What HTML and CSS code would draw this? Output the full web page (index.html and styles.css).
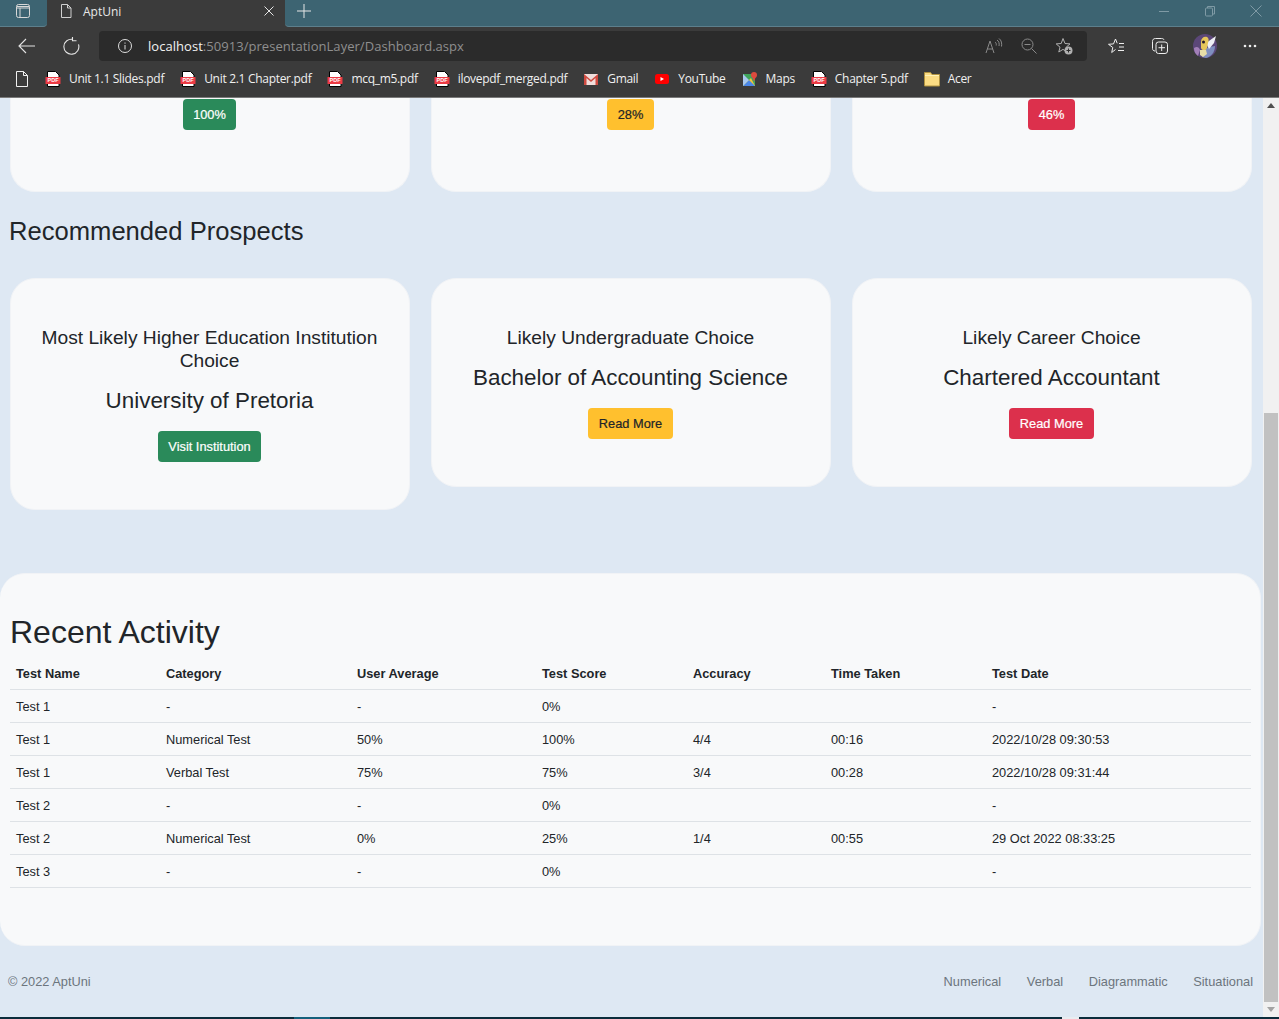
FILE: index.html
```html
<!DOCTYPE html>
<html>
<head>
  <meta charset="utf-8">
  <title>AptUni</title>
  <link rel="stylesheet" href="styles.css">
</head>
<body>
  <div class="tabbar">
    <div class="tabbtn">
      <svg width="16" height="16" viewBox="0 0 16 16" fill="none" stroke="#d8d8d8"><rect x="1.500" y="1.500" width="13" height="13" rx="2"/><path d="M2 3.500h12M1.500 5h13M5 5v9.500" /></svg>
    </div>
    <div class="tab">
      <svg width="14" height="16" viewBox="0 0 14 16" fill="none" stroke="#cfcfcf"><path d="M2.500 1.500h6l3.500 3.500v9.500h-9.500zM8.500 1.500v3.500h3.500"/></svg>
      <span class="tab-title">AptUni</span>
      <svg width="10" height="10" viewBox="0 0 10 10" stroke="#e6e6e6"><path d="M.5 .5l9 9M9.500 .5l-9 9"/></svg>
    </div>
    <div class="strip">
      <div class="newtab">
        <svg width="14" height="14" viewBox="0 0 14 14" stroke="#e6e6e6"><path d="M7 0v14M0 7h14"/></svg>
      </div>
      <div class="winbtns">
        <svg width="12" height="12" viewBox="0 0 12 12" stroke="#7f9aa5"><path d="M1 6.500h10"/></svg>
        <svg width="12" height="12" viewBox="0 0 12 12" fill="none" stroke="#7f9aa5"><rect x="1.500" y="3" width="7" height="8" rx="1"/><path d="M3.500 3v-1.500h7v7.500h-2"/></svg>
        <svg width="12" height="12" viewBox="0 0 12 12" stroke="#7f9aa5"><path d="M.5 .5l11 11M11.500 .5l-11 11"/></svg>
      </div>
    </div>
  </div>

  <div class="toolbar">
    <svg class="tool-back" width="18" height="16" viewBox="0 0 18 16" fill="none" stroke="#e4e4e4" stroke-width="1.100"><path d="M17 8h-15M8 1l-7 7 7 7"/></svg>
    <svg class="tool-reload" width="18" height="18" viewBox="0 0 18 18" fill="none" stroke="#e4e4e4" stroke-width="1.100"><path d="M11 2.400a7.500 7.500 0 1 0 5.500 5"/><path d="M10.500 0v3.800h4"/></svg>
    <div class="addressbar">
      <svg width="16" height="16" viewBox="0 0 16 16" fill="none" stroke="#ddd"><circle cx="8" cy="8" r="6.500"/><path d="M8 7v4.500M8 4.500v1.200"/></svg>
      <span class="url"><span class="url-host">localhost</span>:50913/presentationLayer/Dashboard.aspx</span>
      <div class="addr-icons">
        <svg width="18" height="16" viewBox="0 0 18 16" fill="none" stroke="#8a8a8a"><path d="M1 15l4-12 4 12M2.300 11h5.400M10 4c1.200 .8 1.500 2 1.200 3.500M12 2c2 1.300 2.500 3.500 2 6M14 .5c2.500 1.800 3 5 2.500 8"/></svg>
        <svg width="16" height="16" viewBox="0 0 16 16" fill="none" stroke="#8a8a8a"><circle cx="6.500" cy="6.500" r="5.500"/><path d="M3.500 6.500h6M10.500 10.500l5 5"/></svg>
        <svg width="18" height="18" viewBox="0 0 18 18" fill="none" stroke="#b0b0b0"><path d="M8 1.500l2 5 5 .4-3.800 3.300 1 4.800-4.200-2.600-4.200 2.600 1.200-4.800-3.800-3.300 5-.4z"/><circle cx="13.500" cy="13.500" r="4" fill="#b0b0b0" stroke="none"/><path d="M13.500 11.500v4M11.500 13.500h4" stroke="#2b2b2b"/></svg>
      </div>
    </div>
    <div class="tool-icons">
      <svg width="18" height="18" viewBox="0 0 18 18" fill="none" stroke="#eee"><path d="M8.500 12.500l-3.800 3 1.100-5-4.300-3.200 5-.4 2-4.900 1.700 4.300M12 6.500h5M12 10h5M11 13.500h6"/></svg>
      <svg width="18" height="18" viewBox="0 0 18 18" fill="none" stroke="#eee"><path d="M4 14c-1.500 0-2.500-1-2.500-2.500v-7c0-2 1-3 3-3h6c1.500 0 2.300 .6 2.500 1.500"/><rect x="5" y="5" width="11.500" height="11.500" rx="2.500"/><path d="M10.700 7.500v6.500M7.500 10.700h6.500"/></svg>
      <svg class="avatar" width="24" height="24" viewBox="0 0 24 24">
        <circle cx="12" cy="12" r="12" fill="#5b4778"/>
        <path d="M1 14c3-2 5-1 6 2l-2 6c-3-2-4-5-4-8z" fill="#a27fb8"/>
        <path d="M9 23l2-7 5-3 6-1c0 6-4 11-9 12z" fill="#7f8fc0"/>
        <path d="M13 9l10-7-2 7-5 6z" fill="#eef0f6"/>
        <path d="M8 8c0-4 3-6 6-5 2 1 2 4 1 6l-1 5c-1 3-5 3-6 0z" fill="#e6c65a"/>
        <circle cx="10.500" cy="8" r="1.500" fill="#241a2c"/>
        <path d="M7 16l6 0 1 4-4 3-3-2z" fill="#e8dfa8"/>
      </svg>
      <svg width="14" height="4" viewBox="0 0 14 4" fill="#eee"><circle cx="2" cy="2" r="1.300"/><circle cx="7" cy="2" r="1.300"/><circle cx="12" cy="2" r="1.300"/></svg>
    </div>
  </div>

  <div class="bookmarks">
    <svg class="bm-page" width="14" height="16" viewBox="0 0 14 16" fill="none" stroke="#f0f0f0"><path d="M1.500 .5h7l4 4v11h-11zM8.500 .5v4h4"/></svg>
    <div class="bm"><svg width="16" height="16" viewBox="0 0 16 16"><path d="M2.500 .5h8l3.500 3.500v11.500h-11.500z" fill="#fff" stroke="#000"/><rect x=".5" y="6" width="15" height="7" rx=".5" fill="#ec3a44"/><text x="8" y="11.400" text-anchor="middle" class="pdf-label">PDF</text></svg>Unit 1.1 Slides.pdf</div>
    <div class="bm"><svg width="16" height="16" viewBox="0 0 16 16"><path d="M2.500 .5h8l3.500 3.500v11.500h-11.500z" fill="#fff" stroke="#000"/><rect x=".5" y="6" width="15" height="7" rx=".5" fill="#ec3a44"/><text x="8" y="11.400" text-anchor="middle" class="pdf-label">PDF</text></svg>Unit 2.1 Chapter.pdf</div>
    <div class="bm"><svg width="16" height="16" viewBox="0 0 16 16"><path d="M2.500 .5h8l3.500 3.500v11.500h-11.500z" fill="#fff" stroke="#000"/><rect x=".5" y="6" width="15" height="7" rx=".5" fill="#ec3a44"/><text x="8" y="11.400" text-anchor="middle" class="pdf-label">PDF</text></svg>mcq_m5.pdf</div>
    <div class="bm"><svg width="16" height="16" viewBox="0 0 16 16"><path d="M2.500 .5h8l3.500 3.500v11.500h-11.500z" fill="#fff" stroke="#000"/><rect x=".5" y="6" width="15" height="7" rx=".5" fill="#ec3a44"/><text x="8" y="11.400" text-anchor="middle" class="pdf-label">PDF</text></svg>ilovepdf_merged.pdf</div>
    <div class="bm">
      <svg width="16" height="16" viewBox="0 0 16 16"><rect x="1" y="3" width="14" height="11" fill="#f0dedc"/><path d="M1 3l7 6 7-6v11h-2.500v-7l-4.500 4-4.500-4v7h-2.500z" fill="#cf4a40"/></svg>Gmail</div>
    <div class="bm">
      <svg width="16" height="16" viewBox="0 0 16 16"><rect x="1" y="3" width="14" height="10" rx="2.500" fill="#f00"/><path d="M6.500 6v4l3.500-2z" fill="#fff"/></svg>YouTube</div>
    <div class="bm">
      <svg width="16" height="16" viewBox="0 0 16 16"><rect x="1" y="3" width="12" height="12" fill="#3fa45b"/><path d="M1 15l8-8 4 8z" fill="#f3c33c"/><path d="M1 15l6-6 6 6z" fill="#4a86e8"/><path d="M1 3l6 6-6 6z" fill="#a8c8f0"/><circle cx="12" cy="4" r="3" fill="#dd4b3e"/><path d="M10 5.500l2 5 2-5z" fill="#dd4b3e"/></svg>Maps</div>
    <div class="bm"><svg width="16" height="16" viewBox="0 0 16 16"><path d="M2.500 .5h8l3.500 3.500v11.500h-11.500z" fill="#fff" stroke="#000"/><rect x=".5" y="6" width="15" height="7" rx=".5" fill="#ec3a44"/><text x="8" y="11.400" text-anchor="middle" class="pdf-label">PDF</text></svg>Chapter 5.pdf</div>
    <div class="bm">
      <svg width="16" height="16" viewBox="0 0 16 16"><path d="M.5 1.500h6l1.500 2h7.500v11.500h-15z" fill="#fbdc83" stroke="#b0923f"/><path d="M1 4.500h14" stroke="#fff2b8"/></svg>Acer</div>
  </div>

  <div class="viewport">
    <div class="page">
      <div class="row score-row">
        <div class="card score-card"><span class="btn green">100%</span></div>
        <div class="card score-card"><span class="btn yellow">28%</span></div>
        <div class="card score-card"><span class="btn red">46%</span></div>
      </div>

      <h2 class="section-title">Recommended Prospects</h2>

      <div class="row prospects">
        <div class="card prospect">
          <div class="prospect-label">Most Likely Higher Education Institution Choice</div>
          <div class="prospect-value">University of Pretoria</div>
          <span class="btn green">Visit Institution</span>
        </div>
        <div class="card prospect">
          <div class="prospect-label">Likely Undergraduate Choice</div>
          <div class="prospect-value">Bachelor of Accounting Science</div>
          <span class="btn yellow">Read More</span>
        </div>
        <div class="card prospect">
          <div class="prospect-label">Likely Career Choice</div>
          <div class="prospect-value">Chartered Accountant</div>
          <span class="btn red">Read More</span>
        </div>
      </div>

      <div class="activity">
        <h1 class="activity-title">Recent Activity</h1>
        <table class="activity-table">
          <colgroup>
            <col class="c-name"><col class="c-cat"><col class="c-avg"><col class="c-score"><col class="c-acc"><col class="c-time"><col>
          </colgroup>
          <thead>
            <tr><th>Test Name</th><th>Category</th><th>User Average</th><th>Test Score</th><th>Accuracy</th><th>Time Taken</th><th>Test Date</th></tr>
          </thead>
          <tbody>
            <tr><td>Test 1</td><td>-</td><td>-</td><td>0%</td><td></td><td></td><td>-</td></tr>
            <tr><td>Test 1</td><td>Numerical Test</td><td>50%</td><td>100%</td><td>4/4</td><td>00:16</td><td>2022/10/28 09:30:53</td></tr>
            <tr><td>Test 1</td><td>Verbal Test</td><td>75%</td><td>75%</td><td>3/4</td><td>00:28</td><td>2022/10/28 09:31:44</td></tr>
            <tr><td>Test 2</td><td>-</td><td>-</td><td>0%</td><td></td><td></td><td>-</td></tr>
            <tr><td>Test 2</td><td>Numerical Test</td><td>0%</td><td>25%</td><td>1/4</td><td>00:55</td><td>29 Oct 2022 08:33:25</td></tr>
            <tr><td>Test 3</td><td>-</td><td>-</td><td>0%</td><td></td><td></td><td>-</td></tr>
          </tbody>
        </table>
      </div>

      <div class="footer">
        <span>© 2022 AptUni</span>
        <div class="footer-links"><span>Numerical</span><span>Verbal</span><span>Diagrammatic</span><span>Situational</span></div>
      </div>
    </div>

    <div class="scrollbar">
      <div class="arrow-up"></div>
      <div class="track"><div class="thumb"></div></div>
      <div class="arrow-down"></div>
    </div>
  </div>

  <div class="taskbar"><div class="task-a"></div><div class="task-b"></div></div>
</body>
</html>
```

FILE: styles.css
```css
html, body {
  margin: 0;
  height: 100%;
  overflow: hidden;
}
body {
  display: flex;
  flex-direction: column;
  font-family: "Liberation Sans", Arial, sans-serif;
  background: #dee8f3;
  color: #212529;
}
.pdf-label {
  font: 700 5.500px "Liberation Sans", sans-serif;
  letter-spacing: 0;
  fill: #fff;
}

/* browser frame */
.tabbar {
  display: flex;
  align-items: stretch;
  height: 27px;
  flex: none;
  background: #3b3b3b;
}
.tabbtn {
  width: 47px;
  display: flex;
  align-items: center;
  justify-content: center;
  padding: 0 1px 5px 0;
  box-sizing: border-box;
  background: #3d6472;
  border-bottom: 1px solid #5d7f8c;
  border-radius: 0 0 4px 0;
}
.tab {
  width: 238px;
  display: flex;
  align-items: center;
  color: #e8e8e8;
  font: 12px "Open Sans", sans-serif;
  padding: 0 11px 5px 12px;
  box-sizing: border-box;
}
.tab-title {
  flex: 1;
  margin-left: 10px;
}
.strip {
  flex: 1;
  display: flex;
  background: #3d6472;
  border-bottom: 1px solid #5d7f8c;
  border-radius: 0 0 0 4px;
}
.newtab {
  width: 38px;
  display: flex;
  align-items: center;
  justify-content: center;
  padding-bottom: 4px;
  box-sizing: border-box;
}
.winbtns {
  margin-left: auto;
  display: flex;
  align-items: center;
  gap: 34px;
  padding: 0 17px 4px 0;
}
.toolbar {
  display: flex;
  align-items: center;
  height: 37px;
  flex: none;
  background: #3b3b3b;
}
.tool-back { margin-left: 18px; }
.tool-reload { margin-left: 26px; margin-right: 19px; }
.addressbar {
  width: 988px;
  height: 30px;
  display: flex;
  align-items: center;
  background: #2b2b2b;
  border-radius: 4px;
  padding: 0 14px 0 18px;
  box-sizing: border-box;
  font: 13px "Open Sans", sans-serif;
  color: #8f8f8f;
}
.url { margin-left: 15px; flex: 1; letter-spacing: .04px; }
.url-host { color: #f2f2f2; }
.addr-icons {
  display: flex;
  align-items: center;
  gap: 18px;
}
.tool-icons {
  display: flex;
  align-items: center;
  margin-left: 20px;
  gap: 26px;
}
.avatar { margin-left: -2px; }
.bookmarks {
  display: flex;
  align-items: center;
  height: 34px;
  padding-bottom: 4px;
  box-sizing: border-box;
  flex: none;
  background: #3b3b3b;
  border-bottom: 1px solid #7a7a7a;
  color: #f0f0f0;
  font: 12px "Open Sans", sans-serif;
  letter-spacing: -.3px;
}
.bm-page { margin-left: 15px; margin-right: 16px; }
.bm {
  display: flex;
  align-items: center;
  gap: 8px;
  margin-right: 16px;
  white-space: nowrap;
}

/* page */
.viewport {
  flex: 1;
  display: flex;
  min-height: 0;
  height: 0;
}
.page {
  width: 1263px;
  flex: none;
  overflow: hidden;
}
.row {
  display: flex;
  align-items: flex-start;
  gap: 21px;
  padding: 0 11.500px 0 9.500px;
}
.card {
  flex: 1;
  background: #f8f9fa;
  border: 1px solid #f1f3f6;
  border-radius: 25px;
  box-sizing: border-box;
  text-align: center;
}
.score-card {
  height: 94px;
  border-top: 0;
  border-radius: 0 0 25px 25px;
  padding-top: 1px;
}
.btn {
  display: inline-block;
  font-size: 12.800px;
  line-height: 21px;
  padding: 5px 10.400px;
  border-radius: 4px;
  -webkit-text-stroke: .2px;
}
.green { background: #2a8a5a; color: #fff; }
.yellow { background: #ffc02e; color: #212529; }
.red { background: #dc304c; color: #fff; }
.section-title {
  margin: 23px 0 31px 9px;
  font-size: 25.600px;
  line-height: 32px;
  font-weight: 400;
}
.prospect {
  padding: 47px 24px 47px;
}
.prospect-label {
  font-size: 19.200px;
  line-height: 23px;
}
.prospect-value {
  font-size: 22.400px;
  line-height: 27px;
  margin: 14.500px 0 17.500px;
}
.activity {
  margin-top: 63px;
  width: 1261px;
  height: 373px;
  padding: 40px 10px 0;
  box-sizing: border-box;
  background: #f8f9fa;
  border: 1px solid #f1f3f6;
  border-left: 0;
  border-radius: 25px;
}
.activity-title {
  margin: 0 0 7px;
  font-size: 32px;
  line-height: 36px;
  font-weight: 400;
}
.activity-table {
  width: 1241px;
  table-layout: fixed;
  border-collapse: collapse;
  font-size: 12.800px;
}
.c-name { width: 150px; }
.c-cat { width: 191px; }
.c-avg { width: 185px; }
.c-score { width: 151px; }
.c-acc { width: 138px; }
.c-time { width: 161px; }
.activity-table th,
.activity-table td {
  height: 32px;
  padding: 0 6px;
  text-align: left;
  border-bottom: 1px solid #dee2e6;
}
.activity-table th { font-weight: 700; }
.footer {
  display: flex;
  justify-content: space-between;
  align-items: center;
  margin-top: 25px;
  padding: 0 10px 0 8px;
  font-size: 12.800px;
  line-height: 22px;
  color: #6c757d;
}
.footer-links {
  display: flex;
  gap: 25.600px;
}

/* scrollbar */
.scrollbar {
  width: 16px;
  flex: none;
  display: flex;
  flex-direction: column;
  background: #f1f1f1;
}
.arrow-up, .arrow-down {
  width: 0;
  height: 0;
  margin: 5px 4px;
  border-left: 4px solid transparent;
  border-right: 4px solid transparent;
}
.arrow-up { border-bottom: 5px solid #505050; }
.arrow-down { border-top: 5px solid #a3a3a3; }
.track {
  flex: 1;
  display: flex;
  align-items: flex-end;
  padding: 0 1px;
}
.thumb {
  width: 100%;
  height: 589px;
  background: #c1c1c1;
}
.taskbar {
  display: flex;
  height: 2px;
  flex: none;
  background: #0b2c3b;
}
.task-a {
  width: 36px;
  margin-left: 294px;
  background: #15607c;
}
.task-b {
  width: 17px;
  margin-left: 732px;
  background: #e8edf1;
}
```
